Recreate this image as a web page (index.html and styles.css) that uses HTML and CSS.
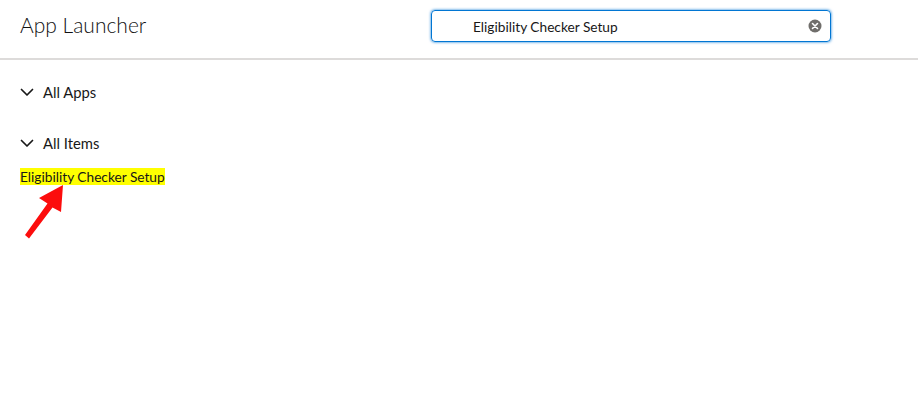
FILE: index.html
```html
<!DOCTYPE html>
<html lang="en">
<head>
  <meta charset="UTF-8">
  <title>App Launcher</title>
  <link rel="stylesheet" href="styles.css">
</head>
<body>

  <header class="header">
    <h1 class="title">App Launcher</h1>
    <div class="search">
      <span class="search-text">Eligibility Checker Setup</span>
      <svg class="clear" width="14" height="14" viewBox="0 0 14 14">
        <circle cx="7" cy="7" r="6.5" fill="#706e6b"/>
        <path d="M4.500 4.500l5 5M9.500 4.500l-5 5" stroke="#fff" stroke-width="1.6" stroke-linecap="round"/>
      </svg>
    </div>
  </header>

  <main class="content">
    <div class="section-head apps-head">
      <svg class="chevron" width="14" height="14" viewBox="0 0 14 14">
        <path d="M1.500 4.500l5.500 5.500 5.500-5.500" fill="none" stroke="#181818" stroke-width="1.7" stroke-linecap="round" stroke-linejoin="round"/>
      </svg>
      <span>All Apps</span>
    </div>
    <div class="section-head items-head">
      <svg class="chevron" width="14" height="14" viewBox="0 0 14 14">
        <path d="M1.500 4.500l5.500 5.500 5.500-5.500" fill="none" stroke="#181818" stroke-width="1.7" stroke-linecap="round" stroke-linejoin="round"/>
      </svg>
      <span>All Items</span>
    </div>
    <div class="item"><mark class="match">Eligibility Checker Setup</mark></div>
  </main>

  <!-- red annotation arrow over the page -->
  <svg class="arrow" width="50" height="62" viewBox="0 0 50 62">
    <path d="M42 0L18 13L26.500 18.500L4 50L8 53.500L31.500 22.500L40 27Z" fill="#fc0d0d"/>
  </svg>

</body>
</html>
```

FILE: styles.css
```css
* {
  box-sizing: border-box;
}

body {
  margin: 0;
  background: #fff;
  color: #181818;
  font-family: Lato, "Open Sans", Arial, sans-serif;
  font-size: 14.800px;
  position: relative;
  min-height: 401px;
  overflow: hidden;
}

.header {
  height: 60px;
  padding: 10px 87px 0 20px;
  display: flex;
  justify-content: space-between;
  align-items: flex-start;
  border-bottom: 2px solid #dddbda;
}

.title {
  margin: 2px 0 0;
  font-size: 21px;
  font-weight: 300;
  line-height: 26px;
  color: #111;
}

.search {
  width: 400px;
  height: 32px;
  padding: 0 8px 0 41px;
  display: flex;
  align-items: center;
  justify-content: space-between;
  border: 1px solid #0176d3;
  border-radius: 4px;
  box-shadow: 0 0 3px #0176d3;
}

.search-text {
  font-size: 13.700px;
}

.content {
  padding: 22px 20px 0;
}

.section-head {
  display: flex;
  align-items: center;
  gap: 9px;
  height: 20px;
}

.items-head {
  margin-top: 31px;
}

.item {
  margin-top: 14px;
  line-height: 18px;
}

.match {
  background: #ff0;
  color: #181818;
  font-size: 13.700px;
}

.arrow {
  position: absolute;
  left: 21px;
  top: 185px;
}
```
